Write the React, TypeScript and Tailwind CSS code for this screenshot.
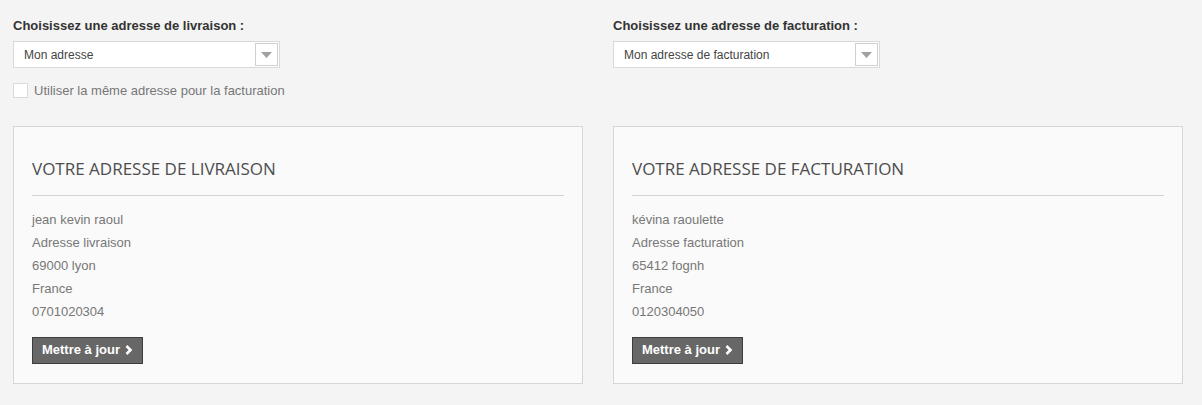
import * as React from "react";

type Address = { name: string; line: string; city: string; country: string; phone: string };

const SHIPPING: Address = {
  name: "jean kevin raoul",
  line: "Adresse livraison",
  city: "69000 lyon",
  country: "France",
  phone: "0701020304",
};

const BILLING: Address = {
  name: "kévina raoulette",
  line: "Adresse facturation",
  city: "65412 fognh",
  country: "France",
  phone: "0120304050",
};

function FakeSelect({ value }: { value: string }) {
  return (
    <div className="flex h-[27px] w-[267px] items-center justify-between border border-[#d9d9d9] bg-white pr-[1px] pl-[10px]">
      <span className="text-[12px] text-[#444]">{value}</span>
      <span className="flex h-[23px] w-[23px] items-center justify-center border border-[#d0d0d0] bg-white">
        <svg width="11" height="6" viewBox="0 0 11 6">
          <path d="M0 0h11L5.5 6z" fill="#a0a0a0" />
        </svg>
      </span>
    </div>
  );
}

function AddressCard({ title, address }: { title: string; address: Address }) {
  return (
    <div className="border border-[#d6d6d6] bg-[#fafafa] px-[18px] pt-[30px] pb-[19px]">
      <h2 className="h-[24px] font-['Open_Sans',sans-serif] text-[17px] leading-[24px] text-[#4d4d4d]">
        {title}
      </h2>
      <div className="mt-[14px] border-t border-[#d4d4d4]" />
      <ul className="mt-[12px] text-[13px] leading-[23px] text-[#777]">
        <li>{address.name}</li>
        <li>{address.line}</li>
        <li>{address.city}</li>
        <li>{address.country}</li>
        <li>{address.phone}</li>
      </ul>
      <button
        type="button"
        className="mt-[14px] flex h-[27px] w-[111px] items-center justify-center gap-[5px] border border-[#3d3d3d] bg-[#676767] text-[13px] font-bold text-white"
      >
        Mettre à jour
        <svg width="8" height="10" viewBox="0 0 8 10">
          <path d="M1.5 1l4 4-4 4" fill="none" stroke="#fff" strokeWidth="2.6" />
        </svg>
      </button>
    </div>
  );
}

export default function App() {
  return (
    <div className="min-h-[405px] bg-[#f4f4f4] pt-[18px] pr-[19px] pl-[13px] font-['Liberation_Sans',Arial,sans-serif]">
      <div className="grid grid-cols-2 gap-[30px]">
        <div>
          <p className="h-[16px] text-[13px] leading-[16px] font-bold text-[#333]">
            Choisissez une adresse de livraison :
          </p>
          <div className="mt-[7px]">
            <FakeSelect value="Mon adresse" />
          </div>
          <label className="mt-[13px] flex items-center gap-[6px] text-[13px] text-[#777]">
            <span className="h-[15px] w-[15px] border border-[#dadada] bg-white" />
            Utiliser la même adresse pour la facturation
          </label>
        </div>
        <div>
          <p className="h-[16px] text-[13px] leading-[16px] font-bold text-[#333]">
            Choisissez une adresse de facturation :
          </p>
          <div className="mt-[7px]">
            <FakeSelect value="Mon adresse de facturation" />
          </div>
        </div>
      </div>
      <div className="mt-[25px] grid grid-cols-2 gap-[30px]">
        <AddressCard title="VOTRE ADRESSE DE LIVRAISON" address={SHIPPING} />
        <AddressCard title="VOTRE ADRESSE DE FACTURATION" address={BILLING} />
      </div>
    </div>
  );
}
